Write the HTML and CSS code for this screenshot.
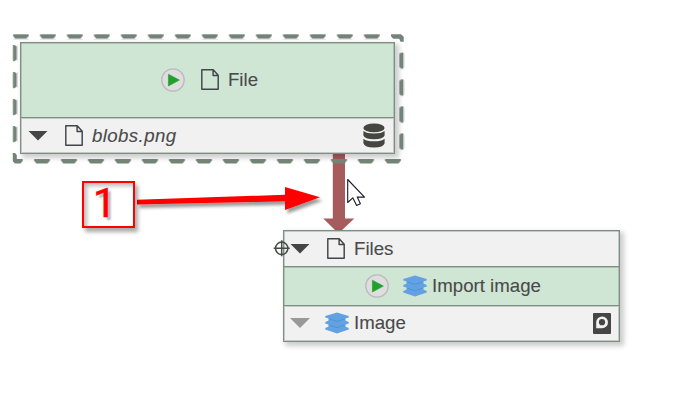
FILE: index.html
```html
<!DOCTYPE html>
<html lang="en">
<head>
<meta charset="utf-8">
<title>Workflow graph</title>
<link rel="stylesheet" href="styles.css">
</head>
<body>
<svg class="defs" width="0" height="0">
  <symbol id="play" viewBox="0 0 24 24"><circle cx="12" cy="12" r="11.2" fill="#dedede" stroke="#bdb9bd" stroke-width="1.3"/><path d="M7.4 6.2V18L18.4 12.1Z" fill="#20a12b" stroke="#20a12b" stroke-width=".6" stroke-linejoin="round"/></symbol>
  <symbol id="page" viewBox="0 0 18 21"><path d="M.8.8H12.2L17.2 6.3V20.2H.8ZM12.1.8V6.4H17.2" fill="none" stroke="#41464a" stroke-width="1.45" stroke-linejoin="round"/></symbol>
  <symbol id="layers" viewBox="0 0 24 22"><g fill="#62a2e2"><path d="M5 14 .3 16V17.4L12 21.4 23.7 17.4V16L19 14Z"/><path d="M5 8 .3 10V11.4L12 15.5 23.7 11.4V10L19 8Z"/><path d="M12 .5 23.7 4V5.4L12 9.1.3 5.4V4Z"/><path d="M3.5 6H20.5V16H3.5Z"/></g><path d="M4.5 13.2 12 15.7 19.5 13.2M4.5 7 12 9.4 19.5 7" fill="none" stroke="#4b8dd0" stroke-width=".8"/></symbol>
  <symbol id="database" viewBox="0 0 22 25"><g fill="#454640"><ellipse cx="11" cy="4.9" rx="10.6" ry="4.4"/><path d="M.4 8.1Q3.5 10.6 11 10.6T21.6 8.1V12.6Q20.5 16.3 11 16.3T.4 12.6Z"/><path d="M.4 15.7Q3.5 18.3 11 18.3T21.6 15.7V20.2Q20.5 24.4 11 24.4T.4 20.2Z"/></g></symbol>
</svg>

<svg class="edge" width="676" height="412"><path d="M332.8 153H345V218.4H354.3L341 231H336L323.3 218.4H332.8Z" fill="#a65c5c"/></svg>

<section class="node node-file">
  <div class="row title">
    <svg class="play"><use href="#play"/></svg>
    <svg class="page"><use href="#page"/></svg>
    <span>File</span>
  </div>
  <div class="row slot">
    <i class="caret"></i>
    <svg class="page"><use href="#page"/></svg>
    <em>blobs.png</em>
    <svg class="database"><use href="#database"/></svg>
  </div>
</section>

<section class="node node-import">
  <div class="row slot">
    <i class="caret"></i>
    <svg class="page"><use href="#page"/></svg>
    <span>Files</span>
  </div>
  <div class="row title">
    <svg class="play"><use href="#play"/></svg>
    <svg class="layers"><use href="#layers"/></svg>
    <span>Import image</span>
  </div>
  <div class="row slot">
    <i class="caret muted"></i>
    <svg class="layers"><use href="#layers"/></svg>
    <span>Image</span>
    <svg class="preview" viewBox="0 0 18 21"><rect width="18" height="21" rx="1" fill="#454545"/><path d="M3.2 15.2V9A5.9 5.9 0 1 1 9.1 15.2Z" fill="#f1f1f1"/><circle cx="9" cy="9.2" r="3.1" fill="#454545"/></svg>
  </div>
</section>

<svg class="overlay" width="676" height="412">
  <defs>
    <pattern id="dash-top" x="12.7" y="34.2" width="27" height="5" patternUnits="userSpaceOnUse"><path d="M.3 0H16V1.8L13.7 4.5H2.6L.3 1.8Z" fill="#748378"/></pattern>
    <pattern id="dash-bottom" x="6.7" y="159" width="27" height="5" patternUnits="userSpaceOnUse"><path d="M.3 0H16.2V1.6L13.9 4.4H2.6L.3 1.6Z" fill="#748378"/></pattern>
    <pattern id="dash-left" x="12.5" y="45" width="5" height="27" patternUnits="userSpaceOnUse"><path d="M.3 0H2L4.3 1.6V14.4L2 16.2H.3Z" fill="#748378"/></pattern>
    <pattern id="dash-right" x="399.2" y="52.4" width="5" height="27" patternUnits="userSpaceOnUse"><path d="M4.3 0H2L0 1.6V14.4L2 16.2H4.3Z" fill="#748378"/></pattern>
    <filter id="soft" x="-20%" y="-80%" width="140%" height="300%"><feDropShadow dx="2.5" dy="3.5" stdDeviation="1.7" flood-opacity=".4"/></filter>
  </defs>
  <rect x="12.7" y="34.2" width="377" height="5" fill="url(#dash-top)"/>
  <rect x="33.7" y="159" width="368" height="5" fill="url(#dash-bottom)"/>
  <rect x="12.5" y="45" width="5" height="100" fill="url(#dash-left)"/>
  <rect x="399.2" y="52.4" width="5" height="98" fill="url(#dash-right)"/>
  <path d="M391 34.2H401L403.7 36.7V41.8H400.5L399.2 38.7H393.2L391 36.2ZM12.8 153H15L16.8 155V159H22.7V161L20.5 163.4H15L12.8 161.2Z" fill="#748378"/>
  <path d="M137 199.7 285 194.8V187L320 197.3 285 210V201.3L137 204.6Z" fill="red" filter="url(#soft)"/>
  <g fill="none" stroke="#454a47" stroke-width="1.5"><circle cx="281.7" cy="248.3" r="6.2"/><path d="M273.7 248.3H289.7M281.7 240.3V256.3"/></g>
  <path d="M347.7 179.5V202.5L352.8 197.8 356.6 205.5 360.4 203.8 357.2 197.1H364.5Z" fill="#fff" stroke="#1d1929" stroke-width="1.1" stroke-linejoin="round"/>
</svg>

<div class="callout">1</div>
</body>
</html>
```
FILE: styles.css
```css
* { box-sizing: border-box; }
body {
  position: relative;
  width: 676px;
  height: 412px;
  margin: 0;
  overflow: hidden;
  background: #fff;
  color: #4a4a4a;
  font-family: "Liberation Sans", Arial, sans-serif;
  font-size: 18.67px;
  -webkit-text-stroke: .1px;
}
.defs, .edge, .overlay { position: absolute; left: 0; top: 0; }
.overlay { pointer-events: none; }

.node {
  position: absolute;
  display: flex;
  flex-direction: column;
  border: 1px solid #7f8e83;
  background: #f1f1f1;
  box-shadow: 3px 3px 5px 1px #0003;
}
.node-file { left: 20px; top: 42px; width: 375px; height: 112px; }
.node-import { left: 283px; top: 230px; width: 337px; height: 112px; }

.row {
  display: flex;
  align-items: center;
  white-space: nowrap;
  box-shadow: inset 1px 0 #7f8e8366, inset -1px 0 #7f8e8366, inset 0 1px #7f8e8366;
}
.row:last-child {
  box-shadow: inset 0 0 0 1px #7f8e8366;
}
.row + .row { border-top: 1px solid #7f8e83; }
.row svg, .caret { flex: none; }
.title { justify-content: center; background: #cfe6d5; }
.slot { padding: 0 9px 0 7px; }

.node-file .title { height: 74px; padding: 0 0 1px 4px; }
.node-file .slot { flex: 1; }
.node-import .slot:first-child { height: 35px; }
.node-import .title { height: 39px; padding: 0 0 1px 3px; }
.node-import .slot { padding-left: 6px; }
.node-import .slot:last-child { flex: 1; padding: 0 8px 1px 6px; }

.caret {
  width: 20px;
  height: 10px;
  background: #454545;
  clip-path: polygon(0 0, 100% 0, 50% 100%);
}
.caret.muted { background: #999; }

.play { width: 24px; height: 24px; }
.page { width: 18px; height: 21px; }
.layers { width: 24px; height: 22px; }
.database { width: 22px; height: 25px; margin-left: auto; }
.preview { width: 18px; height: 21px; margin-left: auto; }

.title .page { margin: 0 9px 0 16px; }
.title .layers { margin: 0 5px 0 14px; }
.slot .page { margin: 0 9px 0 17px; }
.slot .layers { margin: 0 5px 0 15px; }
.title span { padding-top: 1px; }
em { letter-spacing: .4px; }

.callout {
  position: absolute;
  left: 82px;
  top: 181px;
  width: 53px;
  height: 47px;
  padding-left: 9px;
  border: 2px solid red;
  box-shadow: 3px 4px 4px #0005, inset 3px 3px 4px #0004;
  color: red;
  font-family: Roboto, "Liberation Sans", sans-serif;
  font-size: 41px;
  line-height: 41px;
  -webkit-text-stroke: .6px red;
  text-shadow: 3px 3px 2px #6788;
}
```
